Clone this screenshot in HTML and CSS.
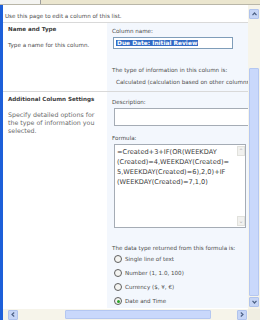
FILE: index.html
```
<!DOCTYPE html>
<html lang="en">

<head>
    <meta charset="UTF-8">
    <title>Edit Column</title>
    <link rel="stylesheet" href="styles.css">
</head>

<body>
    <div class="window">
        <div class="topbar"><div class="tab"></div></div>

        <div class="viewport">
            <div class="page">
                <p class="intro">Use this page to edit a column of this list.</p>

                <!-- Nome e tipo -->
                <div class="section first">
                    <div class="sec-desc">
                        <h3>Name and Type</h3>
                        <p class="desc-text">Type a name for this column.</p>
                    </div>
                    <div class="sec-ctrl">
                        <div class="label">Column name:</div>
                        <div class="textbox"><span class="selected">Due Date: Initial Review</span></div>
                        <div class="label type-label">The type of information in this column is:</div>
                        <div class="label type-value">Calculated (calculation based on other columns)</div>
                    </div>
                </div>

                <!-- Configurações adicionais -->
                <div class="section second">
                    <div class="sec-desc">
                        <h3>Additional Column Settings</h3>
                        <p class="desc-text muted">Specify detailed options for the type of information you selected.</p>
                    </div>
                    <div class="sec-ctrl">
                        <div class="label">Description:</div>
                        <div class="textarea desc-box"></div>

                        <div class="label formula-label">Formula:</div>
                        <div class="textarea formula-box">
                            <div class="formula-text">=Created+3+IF(OR(WEEKDAY<br>(Created)=4,WEEKDAY(Created)=<br>5,WEEKDAY(Created)=6),2,0)+IF<br>(WEEKDAY(Created)=7,1,0)</div>
                            <div class="mini-scroll">
                                <span class="mini-btn">&#8963;</span>
                                <span class="mini-btn">&#8964;</span>
                            </div>
                        </div>

                        <div class="label return-label">The data type returned from this formula is:</div>
                        <ul class="radios">
                            <li><span class="radio"></span>Single line of text</li>
                            <li><span class="radio"></span>Number (1, 1.0, 100)</li>
                            <li><span class="radio"></span>Currency ($, ¥, €)</li>
                            <li><span class="radio checked"></span>Date and Time</li>
                        </ul>
                    </div>
                </div>
            </div>

            <div class="vscroll">
                <span class="sbtn">
                    <svg width="5" height="4" viewBox="0 0 5 4"><path d="M0.5 3.2 L2.5 1 L4.5 3.2" fill="none" stroke="#4d6185" stroke-width="1.2"/></svg>
                </span>
                <div class="vtrack"><div class="vthumb"></div></div>
                <span class="sbtn">
                    <svg width="5" height="4" viewBox="0 0 5 4"><path d="M0.5 0.8 L2.5 3 L4.5 0.8" fill="none" stroke="#4d6185" stroke-width="1.2"/></svg>
                </span>
            </div>
        </div>

        <div class="bottom">
            <div class="hscroll">
                <span class="sbtn">
                    <svg width="4" height="5" viewBox="0 0 4 5"><path d="M3.2 0.5 L1 2.5 L3.2 4.5" fill="none" stroke="#4d6185" stroke-width="1.2"/></svg>
                </span>
                <div class="htrack"><div class="hthumb"></div></div>
                <span class="sbtn">
                    <svg width="4" height="5" viewBox="0 0 4 5"><path d="M0.8 0.5 L3 2.5 L0.8 4.5" fill="none" stroke="#4d6185" stroke-width="1.2"/></svg>
                </span>
            </div>
            <div class="corner"></div>
        </div>
    </div>
</body>

</html>
```

FILE: styles.css
```
/* Estilo global */
body {
    margin: 0;
    padding: 0;
    font-family: "DejaVu Sans", Verdana, sans-serif;
    font-size: 5.6px;
    color: #4c4c4c;
    background-color: #fff;
}

.window {
    width: 260px;
    height: 320px;
    display: flex;
    flex-direction: column;
    overflow: hidden;
}

/* faixa superior */
.topbar {
    height: 4px;
    flex: none;
    background-color: #ebe6cf;
    border-bottom: 1px solid #b9b6a8;
}

.tab {
    width: 40px;
    height: 4px;
    background-color: #f4f4f1;
    border-right: 1px solid #9d9d9d;
}

.viewport {
    flex: 1;
    display: flex;
    min-height: 0;
}

.page {
    flex: 1;
    min-width: 0;
    overflow: hidden;
    border-left: 3px solid #1d5fd9;
}

.intro {
    margin: 0;
    padding: 7px 2px 0;
    height: 10px;
    line-height: 8px;
    border-bottom: 1px solid #d9d9d9;
}

/* seções */
.section {
    display: flex;
    border-top: 1px solid #d9d9d9;
}

.section.first {
    border-top: none;
    height: 68px;
}

.sec-desc {
    width: 104px;
    flex: none;
    padding: 2px 0 0 5px;
    box-sizing: border-box;
}

.sec-desc h3 {
    margin: 0;
    font-size: 5.6px;
    line-height: 8px;
    color: #3b3b3b;
}

.second .sec-desc {
    padding-top: 3px;
}

.desc-text {
    margin: 8px 0 0;
    line-height: 8px;
}

.muted {
    color: #6b6b6b;
    font-size: 6.3px;
    margin-top: 8px;
    padding-right: 4px;
}

.sec-ctrl {
    flex: 1;
    min-width: 0;
    background-color: #f3f7fd;
    padding: 4px 0 0 5px;
    white-space: nowrap;
}

.second .sec-ctrl {
    padding-top: 6px;
}

.label {
    line-height: 8px;
}

.textbox {
    margin: 2px 0 0 1px;
    width: 116px;
    height: 10px;
    border: 1px solid #7f9db9;
    background-color: #fff;
    padding-left: 2px;
    line-height: 10px;
}

.selected {
    background-color: #316ac5;
    color: #fff;
    font-weight: bold;
    font-size: 5.9px;
    padding: 0 1px;
}

.type-label {
    margin-top: 17px;
}

.type-value {
    margin-top: 4px;
    padding-left: 4px;
}

.textarea {
    border: 1px solid #a5acb5;
    background-color: #fff;
    margin-left: 2px;
}

.desc-box {
    margin-top: 2px;
    height: 16px;
    width: 150px;
}

.formula-label {
    margin-top: 8px;
}

.formula-box {
    margin-top: 2px;
    width: 130px;
    height: 82px;
    display: flex;
}

.formula-text {
    flex: 1;
    padding: 2px 0 0 2px;
    font-size: 6.6px;
    line-height: 10px;
    color: #3d3d3d;
}

.mini-scroll {
    width: 8px;
    display: flex;
    flex-direction: column;
    justify-content: space-between;
    padding: 1px 0;
}

.mini-btn {
    height: 8px;
    background-color: #f1f1ef;
    border: 1px solid #e1e1dc;
    color: #b3b3b3;
    font-size: 6px;
    line-height: 8px;
    text-align: center;
}

.return-label {
    margin-top: 16px;
}

.radios {
    list-style: none;
    margin: 0;
    padding: 0 0 0 2px;
}

.radios li {
    display: flex;
    align-items: center;
    height: 14px;
}

.radio {
    width: 6px;
    height: 6px;
    border: 1px solid #5f5f5f;
    border-radius: 50%;
    background-color: #f4f4f1;
    margin-right: 3px;
    position: relative;
}

.radio.checked::after {
    content: "";
    position: absolute;
    left: 1.5px;
    top: 1.5px;
    width: 3px;
    height: 3px;
    border-radius: 50%;
    background-color: #29a329;
}

/* barras de rolagem */
.vscroll {
    width: 12px;
    flex: none;
    display: flex;
    flex-direction: column;
    align-items: center;
    background-color: #f6f4ea;
    padding: 4px 0 2px;
    box-sizing: border-box;
}

.sbtn {
    width: 8px;
    height: 8px;
    flex: none;
    display: flex;
    align-items: center;
    justify-content: center;
    background-color: #c6d5f6;
    border: 1px solid #b0c3ec;
    border-radius: 1px;
}

.vtrack {
    flex: 1;
    width: 100%;
    display: flex;
    flex-direction: column;
    padding: 49px 0 1px;
    box-sizing: border-box;
}

.vthumb {
    flex: 1;
    margin: 0 1px;
    background-color: #c9d8fb;
    border: 1px solid #b4c7f1;
    border-radius: 1px;
}

.bottom {
    height: 11px;
    flex: none;
    display: flex;
}

.hscroll {
    flex: 1;
    display: flex;
    align-items: center;
    background-color: #f6f4ea;
    padding: 0 1px 0 5px;
    border-left: 3px solid #1d5fd9;
}

.htrack {
    flex: 1;
    height: 9px;
    display: flex;
    padding: 0 26px 0 47px;
}

.hthumb {
    flex: 1;
    background-color: #c9d8fb;
    border: 1px solid #b4c7f1;
    border-radius: 1px;
}

.corner {
    width: 12px;
    background-color: #f0eee2;
}
```
